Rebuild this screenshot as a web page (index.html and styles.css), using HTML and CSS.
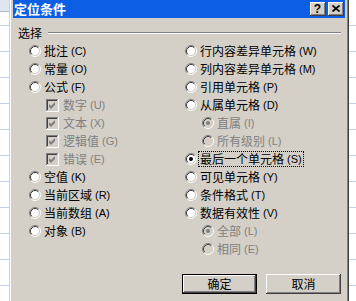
FILE: index.html
```html
<!DOCTYPE html>
<html lang="zh-CN">
<head>
<meta charset="utf-8">
<title>定位条件</title>
<link rel="stylesheet" href="styles.css">
</head>
<body>
<div class="sheet sheet-left"><div class="ribbon"></div></div>
<div class="window">
  <div class="frame">
    <div class="titlebar">
      <span class="title">定位条件</span>
      <div class="cbtns">
        <span class="cbtn help">?</span>
        <span class="cbtn"><svg class="xglyph" viewBox="0 0 8 7"><path d="M0.5 0.5 L7.5 6.5 M7.5 0.5 L0.5 6.5"/></svg></span>
      </div>
    </div>
    <div class="client">
      <div class="ghead"><span class="lbl">选择</span><span class="etch"></span></div>
      <div class="cols">
        <div class="col">
          <div class="row"><svg class="rb"><use href="#rb"/></svg><span>批注</span><span class="acc">(C)</span></div>
          <div class="row"><svg class="rb"><use href="#rb"/></svg><span>常量</span><span class="acc">(O)</span></div>
          <div class="row"><svg class="rb"><use href="#rb"/></svg><span>公式</span><span class="acc">(F)</span></div>
          <div class="row sub dis"><svg class="cb"><use href="#cb"/></svg><span>数字</span><span class="acc">(U)</span></div>
          <div class="row sub dis"><svg class="cb"><use href="#cb"/></svg><span>文本</span><span class="acc">(X)</span></div>
          <div class="row sub dis"><svg class="cb"><use href="#cb"/></svg><span>逻辑值</span><span class="acc">(G)</span></div>
          <div class="row sub dis"><svg class="cb"><use href="#cb"/></svg><span>错误</span><span class="acc">(E)</span></div>
          <div class="row"><svg class="rb"><use href="#rb"/></svg><span>空值</span><span class="acc">(K)</span></div>
          <div class="row"><svg class="rb"><use href="#rb"/></svg><span>当前区域</span><span class="acc">(R)</span></div>
          <div class="row"><svg class="rb"><use href="#rb"/></svg><span>当前数组</span><span class="acc">(A)</span></div>
          <div class="row"><svg class="rb"><use href="#rb"/></svg><span>对象</span><span class="acc">(B)</span></div>
        </div>
        <div class="col">
          <div class="row"><svg class="rb"><use href="#rb"/></svg><span>行内容差异单元格</span><span class="acc">(W)</span></div>
          <div class="row"><svg class="rb"><use href="#rb"/></svg><span>列内容差异单元格</span><span class="acc">(M)</span></div>
          <div class="row"><svg class="rb"><use href="#rb"/></svg><span>引用单元格</span><span class="acc">(P)</span></div>
          <div class="row"><svg class="rb"><use href="#rb"/></svg><span>从属单元格</span><span class="acc">(D)</span></div>
          <div class="row sub dis"><svg class="rb"><use href="#rb"/><circle class="dot" cx="6" cy="6" r="2"/></svg><span>直属</span><span class="acc">(I)</span></div>
          <div class="row sub dis"><svg class="rb"><use href="#rb"/></svg><span>所有级别</span><span class="acc">(L)</span></div>
          <div class="row"><svg class="rb"><use href="#rb"/><circle class="dot" cx="6" cy="6" r="2"/></svg><span class="focus"><span>最后一个单元格</span><span class="acc">(S)</span></span></div>
          <div class="row"><svg class="rb"><use href="#rb"/></svg><span>可见单元格</span><span class="acc">(Y)</span></div>
          <div class="row"><svg class="rb"><use href="#rb"/></svg><span>条件格式</span><span class="acc">(T)</span></div>
          <div class="row"><svg class="rb"><use href="#rb"/></svg><span>数据有效性</span><span class="acc">(V)</span></div>
          <div class="row sub dis"><svg class="rb"><use href="#rb"/><circle class="dot" cx="6" cy="6" r="2"/></svg><span>全部</span><span class="acc">(L)</span></div>
          <div class="row sub dis"><svg class="rb"><use href="#rb"/></svg><span>相同</span><span class="acc">(E)</span></div>
        </div>
      </div>
      <div class="buttons">
        <div class="btn default">确定</div>
        <div class="btn">取消</div>
      </div>
    </div>
  </div>
</div>
<div class="sheet sheet-right"></div>
<svg class="defs" width="0" height="0">
  <symbol id="rb" viewBox="0 0 12 12">
    <circle cx="6" cy="6" r="4.5" class="face"/>
    <path d="M2.11 9.89 A5.5 5.5 0 0 1 9.89 2.11" stroke="#808080" fill="none"/>
    <path d="M9.89 2.11 A5.5 5.5 0 0 1 2.11 9.89" stroke="#ffffff" fill="none"/>
    <path d="M2.82 9.18 A4.5 4.5 0 0 1 9.18 2.82" stroke="#404040" fill="none"/>
    <path d="M9.18 2.82 A4.5 4.5 0 0 1 2.82 9.18" stroke="#d4d0c8" fill="none"/>
  </symbol>
  <symbol id="cb" viewBox="0 0 13 13">
    <rect width="13" height="13" fill="#ffffff"/>
    <rect width="12" height="12" fill="#808080"/>
    <rect x="1" y="1" width="11" height="11" fill="#d4d0c8"/>
    <rect x="1" y="1" width="10" height="10" fill="#404040"/>
    <rect x="2" y="2" width="9" height="9" class="face"/>
    <path d="M3 5 L5 7 L9 3 L9 6 L5 10 L3 8 Z" class="tick"/>
  </symbol>
</svg>
</body>
</html>
```
FILE: styles.css
```css
html, body {
  margin: 0;
  padding: 0;
}
body {
  height: 301px;
  overflow: hidden;
  display: flex;
  background: #ffffff;
  font-family: "Noto Sans CJK SC", "Noto Sans", sans-serif;
  font-size: 12px;
  color: #000000;
}
.sheet {
  background: repeating-linear-gradient(to bottom, transparent 0 25px, #c3cfe4 25px 26px);
}
.sheet-left {
  width: 9px;
  flex: none;
}
.ribbon {
  height: 11px;
  background: #dfe6f2;
  border-bottom: 1px solid #a8b7d2;
}
.sheet-right {
  flex: 1;
}
.defs {
  display: block;
  width: 0;
  height: 0;
  overflow: hidden;
}
.window {
  width: 340px;
  flex: none;
  height: 301px;
  overflow: hidden;
  box-sizing: border-box;
  border-left: 1px solid #d4d0c8;
  border-right: 1px solid #404040;
  background: #d4d0c8;
}
.frame {
  height: 100%;
  box-sizing: border-box;
  border-left: 1px solid #ffffff;
  border-right: 1px solid #808080;
  padding: 0 2px;
}
.titlebar {
  height: 18px;
  background: #0c5fe4;
  display: flex;
  align-items: center;
  justify-content: space-between;
  padding: 0 1px 0 1px;
}
.title {
  color: #ffffff;
  font-weight: bold;
  font-size: 13px;
  line-height: 18px;
}
.cbtns {
  display: flex;
  gap: 2px;
}
.cbtn {
  width: 16px;
  height: 14px;
  box-sizing: border-box;
  background: #d4d0c8;
  box-shadow: inset -1px -1px #404040, inset 1px 1px #ffffff, inset -2px -2px #808080;
  display: flex;
  align-items: center;
  justify-content: center;
}
.help {
  font-family: "Liberation Sans", Arial, sans-serif;
  font-weight: bold;
  font-size: 12px;
  line-height: 14px;
  padding-bottom: 1px;
  padding-right: 1px;
}
.xglyph {
  width: 8px;
  height: 7px;
  margin: 0 1px 1px 0;
}
.xglyph path {
  stroke: #000000;
  stroke-width: 1.7;
  fill: none;
}
.client {
  padding: 7px 4px 0 5px;
}
.ghead {
  display: flex;
  align-items: center;
  height: 16px;
  line-height: 16px;
}
.lbl {
  margin-right: 6px;
}
.etch {
  flex: 1;
  border-top: 1px solid #808080;
  border-bottom: 1px solid #ffffff;
}
.cols {
  display: flex;
  margin-top: 1px;
  padding-left: 11px;
}
.col {
  width: 162px;
}
.row {
  height: 18px;
  line-height: 18px;
  display: flex;
  align-items: center;
  white-space: nowrap;
  --face: #ffffff;
  --dot: #000000;
}
.rb {
  width: 12px;
  height: 12px;
  flex: none;
  margin-right: 3px;
}
.cb {
  width: 13px;
  height: 13px;
  flex: none;
  margin-right: 4px;
}
.face {
  fill: var(--face);
}
.tick {
  fill: var(--dot);
}
.dot {
  fill: var(--dot);
}
.sub {
  padding-left: 17px;
}
.dis {
  color: #808080;
  --face: #d4d0c8;
  --dot: #808080;
}
.acc {
  font-family: "Liberation Sans", Arial, sans-serif;
  font-size: 11px;
  margin-left: 3px;
}
.focus {
  display: flex;
  align-items: center;
  height: 14px;
  line-height: 14px;
  border: 1px dotted #000000;
  padding: 0 1px;
  margin-left: -2px;
}
.buttons {
  display: flex;
  justify-content: flex-end;
  gap: 9px;
  margin-top: 16px;
}
.btn {
  width: 75px;
  height: 20px;
  box-sizing: border-box;
  display: flex;
  align-items: center;
  justify-content: center;
  background: #d4d0c8;
  box-shadow: inset -1px -1px #404040, inset 1px 1px #ffffff, inset -2px -2px #808080;
  line-height: 18px;
}
.btn.default {
  border: 1px solid #000000;
}
```
